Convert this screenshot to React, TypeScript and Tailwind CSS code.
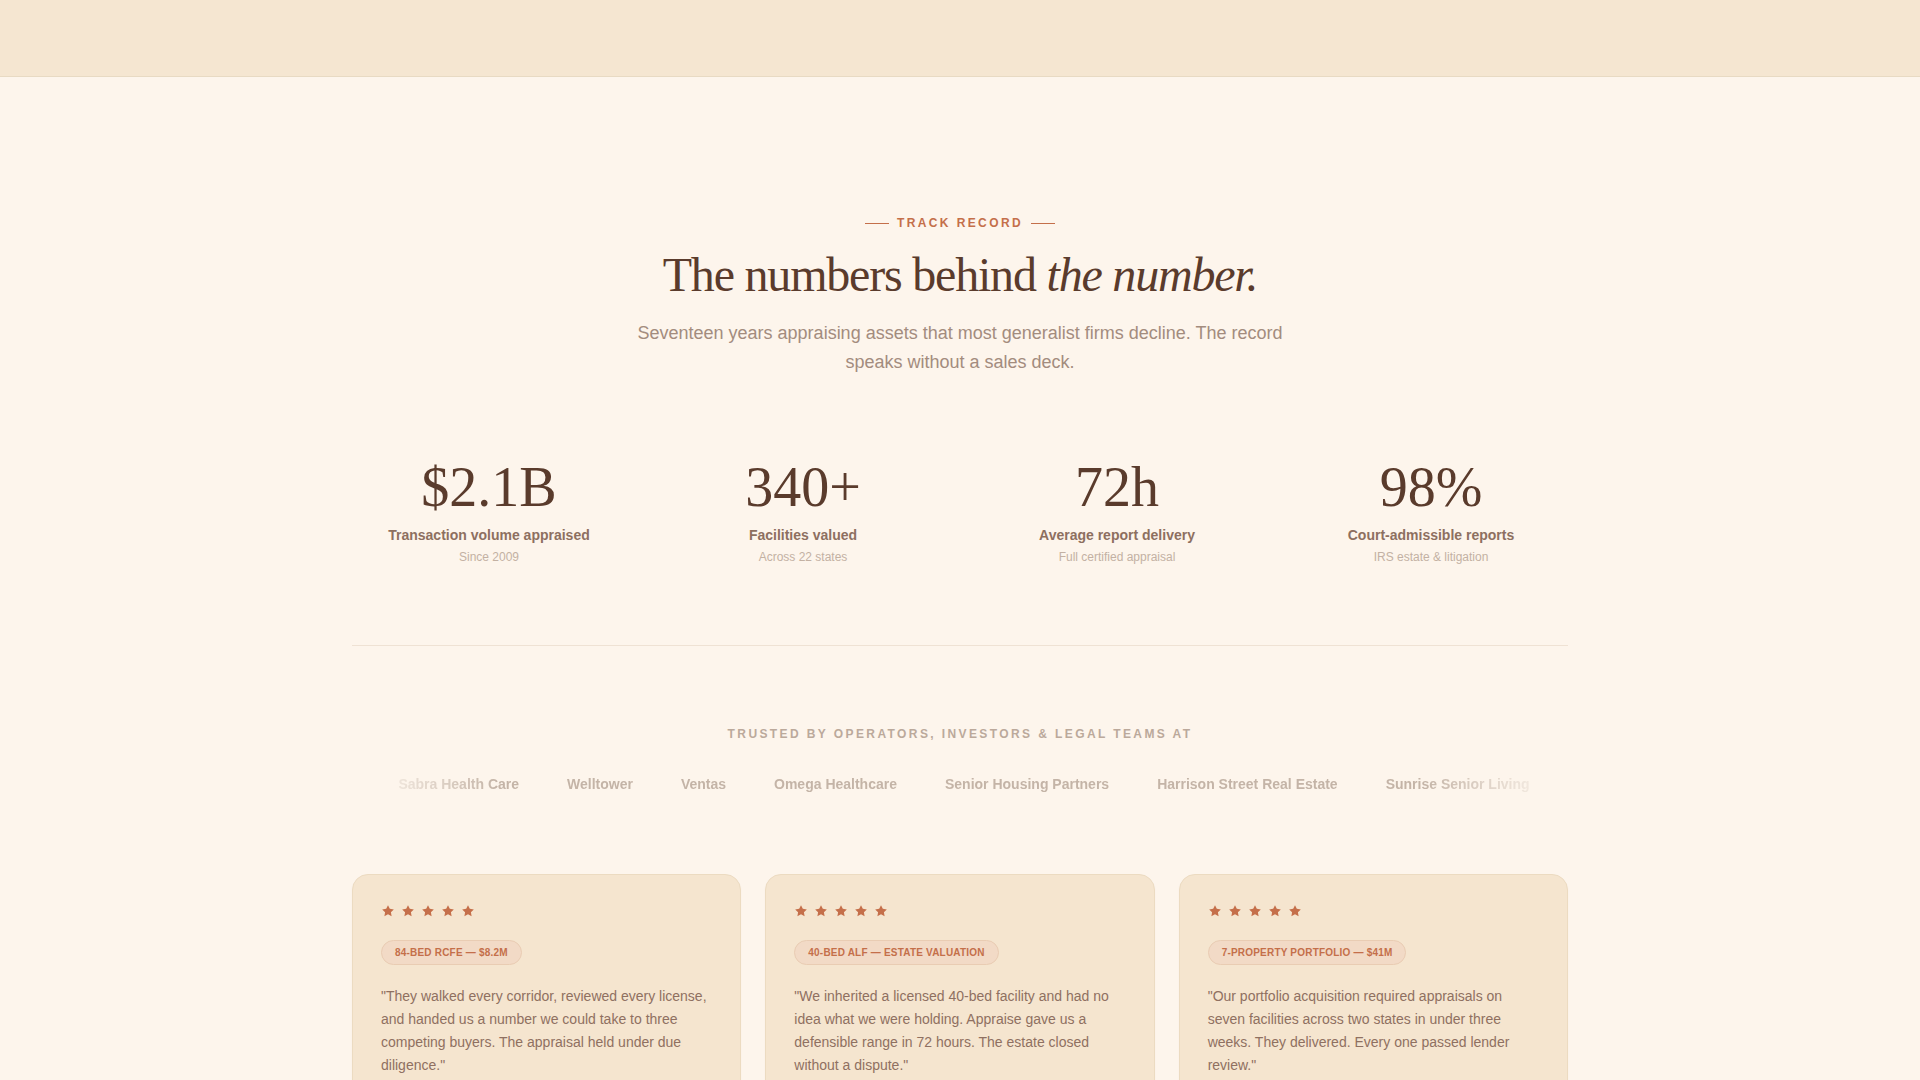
import React from "react";

const serif = { fontFamily: '"Liberation Serif", "Times New Roman", serif' };

const stats = [
  { value: "$2.1B", label: "Transaction volume appraised", sub: "Since 2009" },
  { value: "340+", label: "Facilities valued", sub: "Across 22 states" },
  { value: "72h", label: "Average report delivery", sub: "Full certified appraisal" },
  { value: "98%", label: "Court-admissible reports", sub: "IRS estate & litigation" },
];

const clients = [
  "Sabra Health Care",
  "Welltower",
  "Ventas",
  "Omega Healthcare",
  "Senior Housing Partners",
  "Harrison Street Real Estate",
  "Sunrise Senior Living",
];

const testimonials = [
  {
    tag: "84-Bed RCFE — $8.2M",
    quote:
      '"They walked every corridor, reviewed every license, and handed us a number we could take to three competing buyers. The appraisal held under due diligence."',
    name: "Operator, Southern California",
  },
  {
    tag: "40-Bed ALF — Estate Valuation",
    quote:
      '"We inherited a licensed 40-bed facility and had no idea what we were holding. Appraise gave us a defensible range in 72 hours. The estate closed without a dispute."',
    name: "Estate Executor, Arizona",
  },
  {
    tag: "7-Property Portfolio — $41M",
    quote:
      '"Our portfolio acquisition required appraisals on seven facilities across two states in under three weeks. They delivered. Every one passed lender review."',
    name: "Acquisitions Director, Texas",
  },
];

function Star() {
  return (
    <svg width="14" height="14" viewBox="0 0 24 24" fill="#c56f4a" aria-hidden="true">
      <polygon points="12,2 15.09,8.26 22,9.27 17,14.14 18.18,21.02 12,17.77 5.82,21.02 7,14.14 2,9.27 8.91,8.26" />
    </svg>
  );
}

export default function App() {
  return (
    <div
      className="min-h-screen bg-[#fdf5ec] text-[#5a3b2c]"
      style={{ fontFamily: '"Liberation Sans", Arial, sans-serif' }}
    >
      {/* top bar */}
      <header className="h-[77px] border-b border-[#e8dac3] bg-[#f5e6d1]" />

      <main className="mx-auto max-w-7xl px-8 pt-[138px]">
        {/* section heading */}
        <div className="flex flex-col items-center text-center">
          <div className="flex items-center gap-2 text-xs font-bold uppercase leading-4 tracking-[0.2em] text-[#c46f4a]">
            <span className="h-px w-6 bg-[#c46f4a]" />
            <span>Track Record</span>
            <span className="h-px w-6 bg-[#c46f4a]" />
          </div>
          <h2
            className="mt-4 text-[48px] font-normal leading-[56px] tracking-tight text-[#5a3b2c]"
            style={serif}
          >
            The numbers behind <em className="italic">the number.</em>
          </h2>
          <p className="mt-4 max-w-[660px] text-[18px] leading-[29px] text-[#a38c7e]">
            Seventeen years appraising assets that most generalist firms decline. The record speaks
            without a sales deck.
          </p>
        </div>

        {/* stats */}
        <div className="mt-[82px] grid grid-cols-4 gap-10">
          {stats.map((s) => (
            <div key={s.value} className="flex flex-col items-center text-center">
              <div className="text-[56px] leading-none text-[#5a3b2c]" style={serif}>
                {s.value}
              </div>
              <div className="mt-[10px] text-sm font-bold leading-5 text-[#8d6f60]">{s.label}</div>
              <div className="mt-[4px] text-xs leading-4 text-[#c3b1a3]">{s.sub}</div>
            </div>
          ))}
        </div>

        <div className="mt-20 h-px bg-[#efe2d4]" />

        {/* clients */}
        <div className="pt-20 text-center">
          <p className="text-xs font-bold uppercase leading-4 tracking-[0.2em] text-[#bba99b]">
            Trusted by operators, investors &amp; legal teams at
          </p>
          <div className="mt-8 flex justify-center gap-12 overflow-hidden pl-2 [mask-image:linear-gradient(to_right,transparent_1%,black_12%,black_88%,transparent_99%)]">
            {clients.map((c) => (
              <span key={c} className="whitespace-nowrap text-sm font-bold leading-5 text-[#c4b4a7]">
                {c}
              </span>
            ))}
          </div>
        </div>

        {/* testimonials */}
        <div className="mt-20 grid grid-cols-3 gap-6 pb-24">
          {testimonials.map((t) => (
            <div
              key={t.tag}
              className="rounded-2xl border border-[#ecdbc1] bg-[#f5e5cf] px-7 pb-7 pt-[29px] shadow-[0_1px_2px_rgba(120,80,40,0.04)]"
            >
              <div className="flex gap-1.5">
                <Star />
                <Star />
                <Star />
                <Star />
                <Star />
              </div>
              <span className="mt-[22px] inline-flex h-[25px] items-center rounded-full border border-[#e9ccb3] bg-[#f2dac6] px-[13px] text-[10px] font-bold uppercase tracking-[0.02em] text-[#c46f4a]">
                {t.tag}
              </span>
              <p className="mt-5 text-sm leading-[23px] text-[#8f7061]">{t.quote}</p>
              <div className="mt-6 border-t border-[#e8d6bd] pt-5 text-sm font-bold text-[#6a4a3a]">
                {t.name}
              </div>
            </div>
          ))}
        </div>
      </main>
    </div>
  );
}
